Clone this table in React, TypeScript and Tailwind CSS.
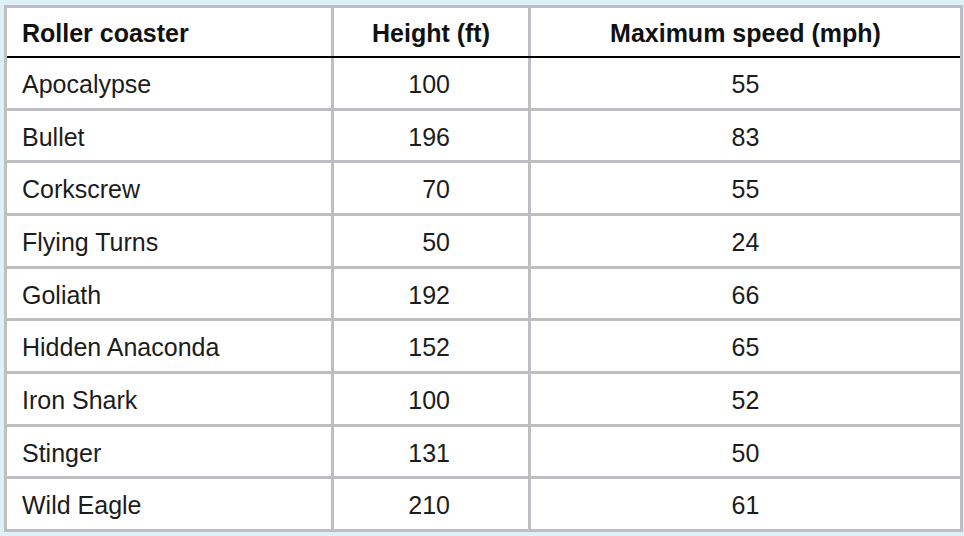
// Roller coaster table

const ROWS: [string, number, number][] = [
  ["Apocalypse", 100, 55],
  ["Bullet", 196, 83],
  ["Corkscrew", 70, 55],
  ["Flying Turns", 50, 24],
  ["Goliath", 192, 66],
  ["Hidden Anaconda", 152, 65],
  ["Iron Shark", 100, 52],
  ["Stinger", 131, 50],
  ["Wild Eagle", 210, 61],
];

export default function App() {
  return (
    <div
      className="w-[964px] h-[536px] bg-[#dcf0f5] pt-[5px] pl-[4px] text-[25px] text-[#1c1c1c]"
      style={{ fontFamily: '"Liberation Sans", Arial, sans-serif' }}
    >
      <div className="w-[959px] h-[527px] border-[3px] border-[#bebec2] bg-white flex flex-col">
        {/* Header */}
        <div className="flex h-[50px] border-b-2 border-black font-bold text-[#111]">
          <div className="w-[324px] flex items-center pl-[15px] pt-[4px]">Roller coaster</div>
          <div className="w-[197px] flex items-center justify-center pt-[4px] border-l-[3px] border-[#bebec2]">
            Height (ft)
          </div>
          <div className="flex-1 flex items-center justify-center pt-[4px] border-l-[3px] border-[#bebec2]">
            Maximum speed (mph)
          </div>
        </div>

        {/* Body */}
        <div className="flex-1 flex flex-col">
          {ROWS.map(([name, height, speed], i) => (
            <div
              key={name}
              className={`flex flex-1 ${i > 0 ? "border-t-[3px] border-[#bebec2]" : ""}`}
            >
              <div className="w-[324px] flex items-center pl-[15px] pt-[4px]">{name}</div>
              <div className="w-[197px] flex items-center justify-center pt-[4px] border-l-[3px] border-[#bebec2]">
                <span className="inline-block w-[42px] mr-[4px] text-right">{height}</span>
              </div>
              <div className="flex-1 flex items-center justify-center pt-[4px] border-l-[3px] border-[#bebec2]">
                {speed}
              </div>
            </div>
          ))}
        </div>
      </div>
    </div>
  );
}
